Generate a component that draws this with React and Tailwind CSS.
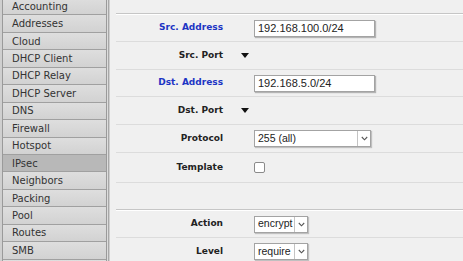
import React from 'react'

const menu = [
  'Accounting', 'Addresses', 'Cloud', 'DHCP Client', 'DHCP Relay', 'DHCP Server',
  'DNS', 'Firewall', 'Hotspot', 'IPsec', 'Neighbors', 'Packing', 'Pool', 'Routes', 'SMB', '',
]

const Chevron = () => (
  <svg width="7" height="5" viewBox="0 0 7 5" className="block">
    <path d="M0.8 1 L3.5 3.8 L6.2 1" fill="none" stroke="#555" strokeWidth="1.1" />
  </svg>
)

const Triangle = () => (
  <svg width="8" height="5" viewBox="0 0 8 5" className="block">
    <path d="M0 0 L8 0 L4 5 Z" fill="#111" />
  </svg>
)

const Select = ({ value, width }) => (
  <div className={`flex h-[17px] items-stretch border border-[#a3a3a3] bg-white shadow-[1px_1px_1px_rgba(0,0,0,0.2)] ${width}`}>
    <div className="flex flex-1 items-center pl-[3px] text-[10.5px] text-[#222] overflow-hidden whitespace-nowrap">{value}</div>
    <div className="flex w-[13px] items-center justify-center border-l border-[#c4c4c4]">
      <Chevron />
    </div>
  </div>
)

const Row = ({ label, blue, height, children, narrow }) => (
  <div className={`flex items-center border-b border-[#dcdcdc] ${height}`}>
    <div className={`w-[107px] text-right text-[9px] font-bold ${blue ? 'text-[#1d35c4]' : 'text-[#222]'}`}>{label}</div>
    <div className={narrow ? 'ml-[18px]' : 'ml-[31px]'}>{children}</div>
  </div>
)

const Section = () => (
  <div>
    <div className="h-px bg-[#c6c6c6]" />
    <div className="h-px bg-white" />
  </div>
)

const TextInput = ({ value }) => (
  <div
    className="flex h-[17px] w-[121px] items-center border border-[#a3a3a3] bg-white pl-[3px] text-[11px] text-[#222] shadow-[1px_1px_1px_rgba(0,0,0,0.25)]"
    style={{ fontFamily: '"Liberation Sans", Arial, sans-serif' }}
  >
    {value}
  </div>
)

export default function App() {
  return (
    <div className="flex h-[261px] w-[463px] overflow-hidden bg-[#f0f0f0]" style={{ fontFamily: '"DejaVu Sans", Verdana, sans-serif' }}>
      {/* Sidebar */}
      <div className="flex h-full w-[110px] bg-[#cfcfcf] pl-[2px]">
        <div className="w-[105px] border-x border-[#9a9a9a] -mt-[2px]">
          {menu.map((m, i) => (
            <div
              key={i}
              className={`flex h-[17.45px] items-center border-b border-[#a0a0a0] pl-[9px] text-[10px] text-[#333] ${m === 'IPsec' ? 'bg-[#b8b8b8]' : 'bg-gradient-to-b from-[#dedede] to-[#d2d2d2]'}`}
            >
              {m}
            </div>
          ))}
        </div>
        <div className="w-px bg-[#dddddd]" />
        <div className="w-px bg-[#a8a8a8]" />
      </div>

      {/* Main */}
      <div className="flex-1 pl-[6px] pt-[13px]">
        <Section />
        <Row label="Src. Address" blue height="h-[27px]">
          <TextInput value="192.168.100.0/24" />
        </Row>
        <Row label="Src. Port" height="h-[28px]" narrow>
          <Triangle />
        </Row>
        <Row label="Dst. Address" blue height="h-[27px]">
          <TextInput value="192.168.5.0/24" />
        </Row>
        <Row label="Dst. Port" height="h-[28px]" narrow>
          <Triangle />
        </Row>
        <Row label="Protocol" height="h-[28px]">
          <div style={{ fontFamily: '"Liberation Sans", Arial, sans-serif' }}>
            <Select value="255 (all)" width="w-[117px]" />
          </div>
        </Row>
        <Row label="Template" height="h-[30px]">
          <div className="h-[11px] w-[11px] rounded-[2px] border border-[#8a8a8a] bg-white" />
        </Row>
        <div className="h-[26px]" />
        <Section />
        <Row label="Action" height="h-[27px]">
          <div style={{ fontFamily: '"Liberation Sans", Arial, sans-serif' }}>
            <Select value="encrypt" width="w-[54px]" />
          </div>
        </Row>
        <Row label="Level" height="h-[28px]">
          <div style={{ fontFamily: '"Liberation Sans", Arial, sans-serif' }}>
            <Select value="require" width="w-[54px]" />
          </div>
        </Row>
      </div>
    </div>
  )
}
